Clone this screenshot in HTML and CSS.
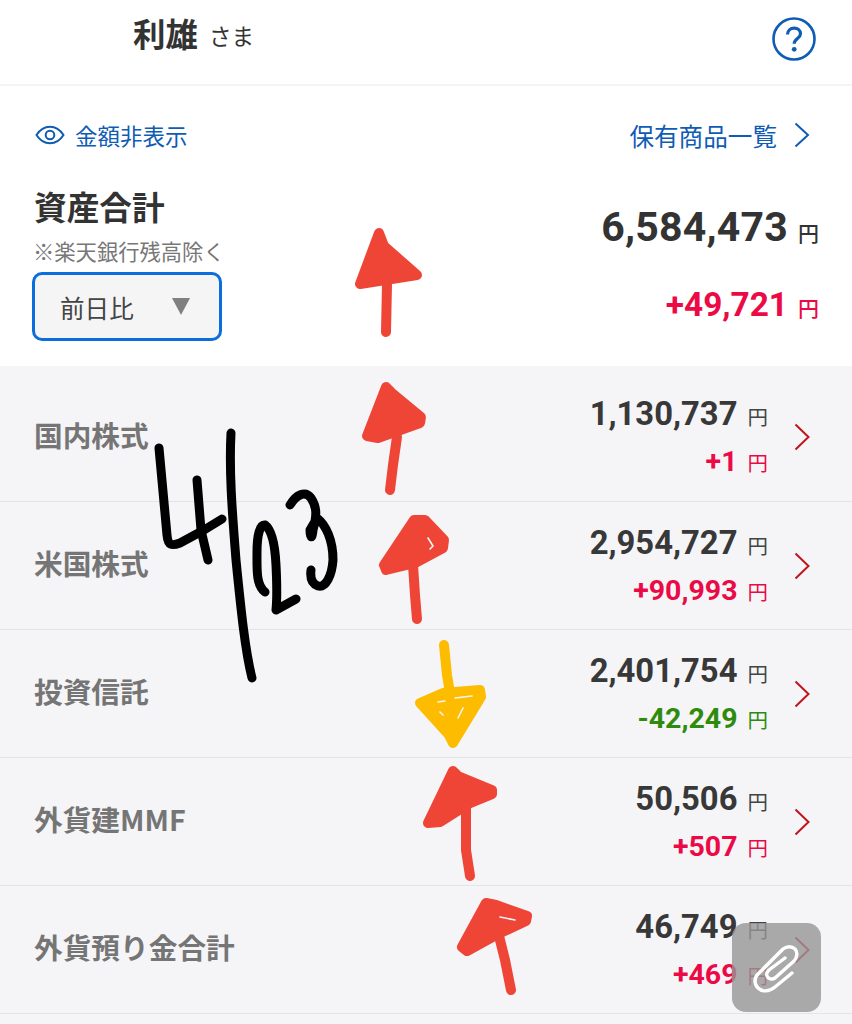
FILE: index.html
```html
<!DOCTYPE html>
<html lang="ja">
<head>
<meta charset="utf-8">
<title>資産合計</title>
<link rel="stylesheet" href="styles.css">
</head>
<body>
<div class="page">
  <header class="header">
    <div class="user"><span class="name">利雄</span><span class="honor">さま</span></div>
    <svg class="help" viewBox="0 0 44 44" aria-hidden="true"><circle cx="22" cy="22" r="20.500" fill="none" stroke="#0f5cb5" stroke-width="2.600"/><path d="M15.500 17.500c0-4 3-6.300 6.600-6.300 3.800 0 6.400 2.400 6.400 5.600 0 4.700-6.300 4.900-6.300 10" fill="none" stroke="#0f5cb5" stroke-width="3.200"/><circle cx="22.200" cy="32.300" r="2.400" fill="#0f5cb5"/></svg>
  </header>
  <section class="summary">
    <div class="links">
      <div class="link"><svg class="eye" viewBox="0 0 30 20" aria-hidden="true"><path d="M1.500 10C5 4.500 9.500 1.700 15 1.700S25 4.500 28.500 10C25 15.500 20.500 18.300 15 18.300S5 15.500 1.500 10Z" fill="none" stroke="#0f5cb5" stroke-width="2"/><circle cx="15" cy="10" r="4.300" fill="none" stroke="#0f5cb5" stroke-width="2"/></svg><span>金額非表示</span></div>
      <div class="link link-list"><span>保有商品一覧</span><svg class="chev-blue" viewBox="0 0 16 26" aria-hidden="true"><path d="M1.500 1.500 14 13 1.500 24.500" fill="none" stroke="#0f5cb5" stroke-width="2"/></svg></div>
    </div>
    <div class="totals">
      <div class="totals-left">
        <h1 class="title">資産合計</h1>
        <p class="note">※楽天銀行残高除く</p>
        <div class="select"><span>前日比</span><i class="tri"></i></div>
      </div>
      <div class="totals-right">
        <div class="total"><b>6,584,473</b><span>円</span></div>
        <div class="diff up"><b>+49,721</b><span>円</span></div>
      </div>
    </div>
  </section>
  <main class="rows">
    <div class="row first"><div class="label">国内株式</div><div class="vals"><div class="val"><b>1,130,737</b><span>円</span></div><div class="chg up"><b>+1</b><span>円</span></div></div><svg class="chev" viewBox="0 0 16 28"><path d="M1.500 1.500 14.500 14 1.500 26.500"/></svg></div>
    <div class="row"><div class="label">米国株式</div><div class="vals"><div class="val"><b>2,954,727</b><span>円</span></div><div class="chg up"><b>+90,993</b><span>円</span></div></div><svg class="chev" viewBox="0 0 16 28"><path d="M1.500 1.500 14.500 14 1.500 26.500"/></svg></div>
    <div class="row"><div class="label">投資信託</div><div class="vals"><div class="val"><b>2,401,754</b><span>円</span></div><div class="chg down"><b>-42,249</b><span>円</span></div></div><svg class="chev" viewBox="0 0 16 28"><path d="M1.500 1.500 14.500 14 1.500 26.500"/></svg></div>
    <div class="row"><div class="label">外貨建MMF</div><div class="vals"><div class="val"><b>50,506</b><span>円</span></div><div class="chg up"><b>+507</b><span>円</span></div></div><svg class="chev" viewBox="0 0 16 28"><path d="M1.500 1.500 14.500 14 1.500 26.500"/></svg></div>
    <div class="row"><div class="label">外貨預り金合計</div><div class="vals"><div class="val"><b>46,749</b><span>円</span></div><div class="chg up"><b>+469</b><span>円</span></div></div><svg class="chev" viewBox="0 0 16 28"><path d="M1.500 1.500 14.500 14 1.500 26.500"/></svg></div>
  </main>

  <svg class="ink" viewBox="0 0 852 1024" aria-hidden="true">
    <g class="red">
      <path class="fill" d="M379 233 384 246 417 275 360 284 Z"/>
      <path class="stem" d="M387 284 386 332"/>
      <path class="fill" d="M386 387 392 393 421 417 420 423 378 438 367 436 Z"/>
      <path class="stem" d="M397 437 393 465 390 490"/>
      <path class="fill" d="M414 520 425 520 444 540 443 548 415 563 386 570 384 565 Z"/>
      <path class="stem" d="M413 565 415 595 417 619"/>
      <path class="fill" d="M453 771 458 776 492 790 492 794 470 803 440 822 428 823 Z"/>
      <path class="stem" d="M466 805 466 850 470 876"/>
      <path class="fill" d="M486 903 496 905 527 916 526 921 496 935 467 951 462 947 Z"/>
      <path class="stem" d="M498 932 505 960 511 990"/>
      <path class="sliver" d="M428 538 433 546 430 549"/>
      <path class="sliver" d="M500 917 515 920"/>
    </g>
    <g class="yellow">
      <path class="stem" d="M444 645 447 675 450 693"/>
      <path class="fill" d="M420 703 443 693 480 690 481 697 453 743 449 735 Z"/>
      <path class="sliver" d="M438 702 445 701"/>
      <path class="sliver" d="M455 698 472 696"/>
      <path class="sliver" d="M440 712 443 715"/>
      <path class="sliver" d="M463 708 458 718"/>
    </g>
    <path class="black" d="M159 448 167 535C168 546 172 546 180 543L204 530 222 519"/>
    <path class="black" d="M197 480 201 530 208 560"/>
    <path class="black" d="M231 433C229 470 232 510 236 560 241 610 245 650 252 678"/>
    <path class="black" d="M265 592C256 585 257 570 257 552 257 535 260 524 265 525 272 530 275 545 276 565 277 585 277 600 276 610L296 599"/>
    <path class="black" d="M290 505C296 495 305 490 311 498 317 507 317 515 313 530 312 540 310 538 310 530L317 518C326 525 333 540 333 560 332 575 326 588 318 586 312 584 310 578 311 570"/>
  </svg>

  <div class="clip">
    <svg viewBox="2 3 89 89" aria-hidden="true"><path d="M62 53 45 67C39 72 32 72 28 68 24 64 24 58 28 54L53 29C57 26 62 26 65 29 68 32 67 38 64 41L45 58C42 60 38 59 37 56 36 54 37 52 39 50L55 38" fill="none" stroke="#fff" stroke-width="3.400" stroke-linecap="round" stroke-linejoin="round"/></svg>
  </div>
</div>
</body>
</html>
```
FILE: styles.css
```css
* { box-sizing: border-box; }
html, body { margin: 0; padding: 0; }
body {
  background: #f5f5f8;
  font-family: Roboto, "Noto Sans CJK JP", sans-serif;
  color: #333;
}
.page { position: relative; width: 852px; height: 1024px; overflow: hidden; }

.header {
  height: 86px;
  background: #fff;
  border-bottom: 2px solid #f4f4f4;
  display: flex;
  align-items: flex-start;
  justify-content: space-between;
  padding: 12px 36px 0 133px;
}
.user { display: flex; align-items: baseline; gap: 11px; font-family: "Noto Sans CJK JP", sans-serif; line-height: 42px; }
.name { font-size: 32.500px; font-weight: 700; }
.honor { font-size: 22.500px; position: relative; top: -2px; }
.help { width: 44px; height: 44px; margin-top: 5px; }

.summary { height: 280px; background: #fff; padding: 33px 34px 0; font-family: "Noto Sans CJK JP", sans-serif; }
.links { display: flex; justify-content: space-between; align-items: center; height: 32px; }
.link { display: flex; align-items: center; color: #0f5cb5; font-size: 22.500px; line-height: 32px; }
.eye { width: 30px; height: 20px; margin: 0 10px 0 1px; }
.link-list { font-size: 24.600px; margin-right: 8px; }
.chev-blue { width: 16px; height: 26px; margin-left: 17px; }

.totals { display: flex; justify-content: space-between; margin-top: 31px; }
.title { margin: 0; font-size: 32.700px; font-weight: 700; line-height: 48px; }
.note { margin: 0; font-size: 21.300px; color: #777; line-height: 32px; margin-left: -1px; margin-top: 5px; }
.select {
  width: 190px; height: 69px; margin: 5px 0 0 -2px;
  border: 3px solid #0a6fdc; border-radius: 10px; background: #f5f5f5;
  display: flex; align-items: center; padding-left: 25px;
  font-size: 24.600px; color: #444;
}
.tri { width: 0; height: 0; margin-left: 38px; border-left: 9px solid transparent; border-right: 9px solid transparent; border-top: 17px solid #808080; }

.totals-right { display: flex; flex-direction: column; align-items: flex-end; margin-right: -1px; }
.total, .diff { display: flex; align-items: baseline; gap: 10px; }
.total { margin-top: 19px; line-height: 52px; }
.total b { font-size: 41px; font-weight: 700; letter-spacing: .2px; font-family: Roboto, sans-serif; }
.total span, .diff span { font-size: 21px; font-weight: 500; }
.diff { margin-top: 24px; line-height: 46px; }
.diff b { font-size: 33.400px; font-weight: 700; font-family: Roboto, sans-serif; }

.rows { font-family: "Noto Sans CJK JP", sans-serif; }
.row {
  height: 128px;
  display: flex; align-items: center;
  padding: 0 42px 0 34px;
  border-bottom: 1px solid #e4e4e6;
  background: #f5f5f8;
}
.row.first { height: 136px; padding-top: 7px; }
.label { flex: 1; padding-bottom: 6px; font-size: 28.700px; font-weight: 700; color: #757575; }
.vals { display: flex; flex-direction: column; align-items: flex-end; gap: 6px; margin: 2px 26px 0 0; }
.val, .chg { display: flex; align-items: baseline; gap: 10px; line-height: 40px; }
.val b { font-size: 32.800px; font-weight: 700; font-family: Roboto, sans-serif; color: #383838; }
.chg b { font-size: 28.500px; font-weight: 700; font-family: Roboto, sans-serif; }
.val span, .chg span { font-size: 20.500px; font-weight: 400; }
.val span { color: #444; }
.chev { width: 16px; height: 28px; fill: none; stroke: #c0141e; stroke-width: 2; }

.up { color: #eb0a46; }
.down { color: #2e8b0b; }

.ink { position: absolute; left: 0; top: 0; width: 852px; height: 1024px; fill: none; stroke-linecap: round; stroke-linejoin: round; }
.red { stroke: #ee4537; stroke-width: 10; }
.red .fill { fill: #ee4537; }
.yellow { stroke: #fdbc00; stroke-width: 10; }
.yellow .fill { fill: #fdbc00; }
.black { stroke: #000; stroke-width: 9; }
.sliver { stroke: #f5f5f8; stroke-width: 1.600; }

.clip {
  position: absolute; left: 732px; top: 923px; width: 89px; height: 89px;
  border-radius: 14px; background: rgba(150,150,150,.8);
}
.clip svg { display: block; width: 89px; height: 89px; }
```
